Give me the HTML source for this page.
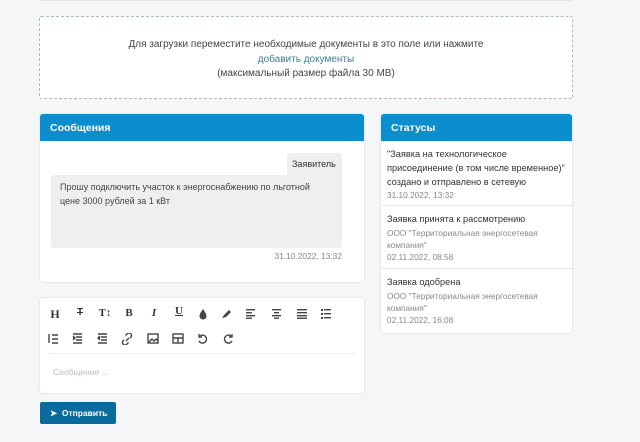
<!DOCTYPE html>
<html><head><meta charset="utf-8"><style>
*{box-sizing:border-box;margin:0;padding:0}
body{width:640px;height:442px;background:#f5f6f8;font-family:"Liberation Sans",sans-serif;position:relative;overflow:hidden;color:#333}
.abs{position:absolute}
.card{position:absolute;background:#fff;border-radius:3px;box-shadow:0 0 2px rgba(0,0,0,.15)}
.hdr{height:27px;background:#0b8ece;color:#fff;font-weight:bold;font-size:10.5px;padding:8px 10px;border-radius:3px 3px 0 0}
.ic{position:absolute;font-size:11px;color:#333;font-weight:bold;text-align:center;width:14px}
.st{border-bottom:1px solid #e8e8e8;padding:6px 5px 0 6px;font-size:9.2px;line-height:13px;color:#333}
.st .g{color:#888;font-size:8.3px;line-height:12px}
</style></head><body>
<div class="abs" style="left:39px;top:0;width:533px;height:1px;background:#e4e6e9"></div>
<div class="abs" style="left:39px;top:16px;width:534px;height:83px;background:#fff;border:1px dashed #a9bdbb;border-radius:2px;text-align:center;font-size:10px;color:#444;line-height:14.5px;padding-top:21px">
Для загрузки переместите необходимые документы в это поле или нажмите<br><span style="color:#3a7fa1">добавить документы</span><br>(максимальный размер файла 30 MB)</div>

<div class="card" style="left:40px;top:114px;width:324px;height:168px">
<div class="hdr">Сообщения</div>
<div class="abs" style="left:247px;top:39px;width:55px;height:25px;background:#efefef;border-radius:3px;font-size:9px;padding:6px 0 0 5px">Заявитель</div>
<div class="abs" style="left:11px;top:61px;width:291px;height:73px;background:#efefef;border-radius:3px;font-size:9px;line-height:14px;padding:5px 9px;color:#444"><span style="white-space:nowrap">Прошу подключить участок к энергоснабжению по льготной</span><br>цене 3000 рублей за 1 кВт</div>
<div class="abs" style="right:22px;top:137px;font-size:8.4px;color:#888">31.10.2022, 13:32</div>
</div>

<div class="card" style="left:40px;top:298px;width:324px;height:95px">
<div class="abs" style="left:9px;top:55px;width:306px;height:1px;background:#eee"></div>
<div class="abs" style="left:13px;top:69px;font-size:8.5px;color:#bbb">Сообщение ...</div>
</div>
<div class="ic" style="left:48px;top:307px;font-family:'Liberation Serif',serif;font-size:12px">H</div>
<div class="ic" style="left:73px;top:307px;font-size:10px;text-decoration:line-through">T</div>
<div class="ic" style="left:96px;top:307px;font-family:'Liberation Serif',serif;font-size:11px;width:18px">T↕</div>
<div class="ic" style="left:122px;top:307px;font-family:'Liberation Serif',serif">B</div>
<div class="ic" style="left:147px;top:307px;font-family:'Liberation Serif',serif;font-style:italic">I</div>
<div class="ic" style="left:172px;top:305px;font-family:'Liberation Serif',serif;text-decoration:underline">U</div>
<svg class="abs" style="left:198px;top:308px" width="10" height="12"><path d="M5 1 C3 4 1.5 6 1.5 8 a3.5 3.5 0 0 0 7 0 C8.5 6 7 4 5 1Z" fill="#444"/></svg>
<svg class="abs" style="left:220px;top:308px" width="12" height="12"><path d="M2 10 L4 7 L9 2 L11 4 L6 9 Z" fill="#444"/></svg>
<svg class="abs" style="left:246px;top:309px" width="130" height="10" fill="#444">
<rect x="0" y="0" width="9" height="1.4"/><rect x="0" y="3" width="6" height="1.4"/><rect x="0" y="6" width="9" height="1.4"/><rect x="0" y="8.5" width="6" height="1.4"/>
<rect x="26" y="0" width="9" height="1.4"/><rect x="28" y="3" width="5" height="1.4"/><rect x="26" y="6" width="9" height="1.4"/><rect x="28" y="8.5" width="5" height="1.4"/>
<rect x="51" y="0" width="10" height="1.4"/><rect x="51" y="3" width="10" height="1.4"/><rect x="51" y="6" width="10" height="1.4"/><rect x="51" y="8.5" width="10" height="1.4"/>
<rect x="75" y="0" width="2" height="2"/><rect x="78" y="0" width="7" height="1.4"/><rect x="75" y="4" width="2" height="2"/><rect x="78" y="4" width="7" height="1.4"/><rect x="75" y="8" width="2" height="2"/><rect x="78" y="8" width="7" height="1.4"/>
</svg>
<svg class="abs" style="left:48px;top:333px" width="190" height="12" fill="none" stroke="#444" stroke-width="1.4">
<path d="M1 1v9M4 2h6M4 6h6M4 10h6"/>
<path d="M25 1h9M28 4h6M28 7h6M25 10h9" /><path d="M25 3l2 2-2 2" fill="#444"/>
<path d="M50 1h9M53 4h6M53 7h6M50 10h9"/><path d="M52 3l-2 2 2 2" fill="#444"/>
<path d="M76 7l-1 1a2.5 2.5 0 0 0 3.5 3.5l2-2M82 5l1-1a2.5 2.5 0 0 0-3.5-3.5l-2 2M78 8l3-3"/>
<rect x="100" y="1" width="10" height="9"/><path d="M101 9l3-3 2 2 2-2 2 2" />
<rect x="125" y="1" width="10" height="9"/><path d="M125 5h10M130 5v5"/>
<path d="M152 3a4 4 0 1 1 -1 5M151 1v3h3"/>
<path d="M183 3a4 4 0 1 0 1 5M184 1v3h-3"/>
</svg>
<div class="abs" style="left:40px;top:402px;width:76px;height:22px;background:#0a6c9c;border-radius:2px;color:#fff;font-size:8.5px;font-weight:bold;padding:6px 0 0 10px">➤&nbsp; Отправить</div>

<div class="card" style="left:381px;top:114px;width:191px;height:219px">
<div class="hdr">Статусы</div>
<div class="st" style="height:65px;line-height:14px">"Заявка на технологическое<br>присоединение (в том числе временное)" создано и отправлено в сетевую<div class="g">31.10.2022, 13:32</div></div>
<div class="st" style="height:63px;padding-top:7px">Заявка принята к рассмотрению<div class="g" style="margin-top:1px">ООО "Территориальная энергосетевая компания"<br>02.11.2022, 08:58</div></div>
<div class="st" style="height:64px;border:none;padding-top:7px">Заявка одобрена<div class="g" style="margin-top:1px">ООО "Территориальная энергосетевая компания"<br>02.11.2022, 16:08</div></div>
</div>
</body></html>
